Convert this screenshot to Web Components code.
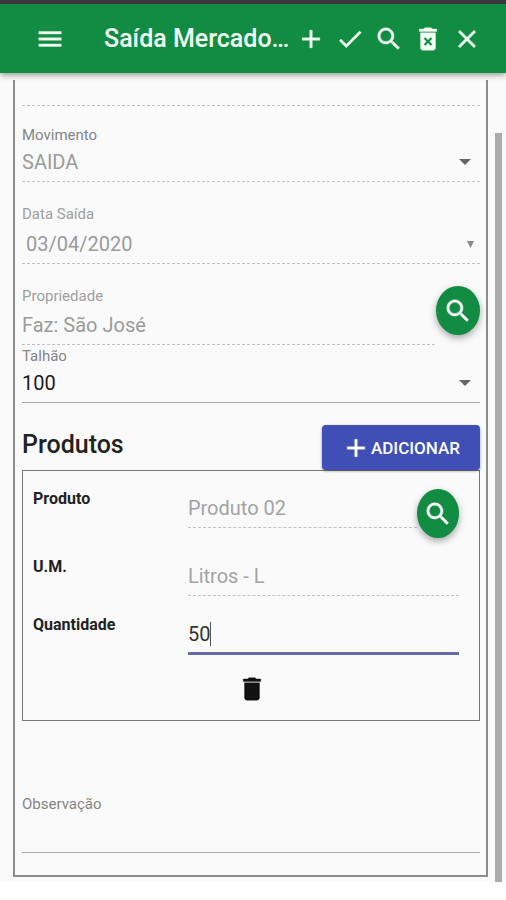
<!DOCTYPE html>
<html lang="pt-BR">
<head>
<meta charset="utf-8">
<meta name="viewport" content="width=device-width, initial-scale=1">
<title>Saída Mercadoria</title>
<style>
body { margin: 0; background: #fff; font-family: Roboto, "Liberation Sans", sans-serif; color: #212121; }
</style>
</head>
<body>
<saida-app></saida-app>
<script>
const ICONS = {
  menu: 'M3 18h18v-2H3v2zm0-5h18v-2H3v2zm0-7v2h18V6H3z',
  add: 'M19 13h-6v6h-2v-6H5v-2h6V5h2v6h6v2z',
  done: 'M9 16.2L4.8 12l-1.4 1.4L9 19 21 7l-1.4-1.4L9 16.2z',
  search: 'M15.5 14h-.79l-.28-.27C15.41 12.59 16 11.11 16 9.5 16 5.91 13.09 3 9.5 3S3 5.91 3 9.5 5.91 16 9.5 16c1.61 0 3.09-.59 4.23-1.57l.27.28v.79l5 4.99L20.49 19l-4.99-5zm-6 0C7.01 14 5 11.99 5 9.5S7.01 5 9.5 5 14 7.01 14 9.5 11.99 14 9.5 14z',
  discard: 'M6 19c0 1.1.9 2 2 2h8c1.1 0 2-.9 2-2V7H6v12zm2.46-7.12l1.41-1.41L12 12.59l2.12-2.12 1.41 1.41L13.41 14l2.12 2.12-1.41 1.41L12 15.41l-2.12 2.12-1.41-1.41L10.59 14l-2.13-2.12zM15.5 4l-1-1h-5l-1 1H5v2h14V4z',
  delete: 'M6 19c0 1.1.9 2 2 2h8c1.1 0 2-.9 2-2V7H6v12zM19 4h-3.5l-1-1h-5l-1 1H5v2h14V4z',
  close: 'M19 6.41L17.59 5 12 10.59 6.41 5 5 6.41 10.59 12 5 17.59 6.41 19 12 13.41 17.59 19 19 17.59 13.41 12z'
};

function define(name, render) {
  customElements.define(name, class extends HTMLElement {
    constructor() {
      super();
      this.attachShadow({ mode: 'open' });
    }
    connectedCallback() {
      this.shadowRoot.innerHTML = render(this);
    }
  });
}

define('m-icon', el => `
  <style>
    :host { display: block; width: 30px; height: 30px; flex: none; }
    svg { display: block; width: 100%; height: 100%; fill: currentColor; stroke: currentColor; stroke-width: .3; }
  </style>
  <svg viewBox="0 0 24 24" aria-hidden="true"><path d="${ICONS[el.getAttribute('name')]}"/></svg>`);

define('m-icon-button', el => `
  <style>
    :host { display: block; flex: none; }
    button { display: grid; place-items: center; width: 39px; height: 48px; padding: 0; border: 0; background: none; color: inherit; }
    :host([compact]) button { height: 30px; }
  </style>
  <button type="button" aria-label="${el.getAttribute('label')}"><m-icon name="${el.getAttribute('name')}"></m-icon></button>`);

define('m-fab', el => `
  <style>
    :host { display: block; flex: none; width: 44px; }
    button { display: grid; place-items: center; width: 100%; height: 49px; padding: 0; border: 0; border-radius: 50%;
      background: #128c43; color: #fff; box-shadow: 0 3px 7px rgba(0,0,0,.34); }
  </style>
  <button type="button" aria-label="${el.getAttribute('label')}"><m-icon name="search"></m-icon></button>`);

define('app-bar', el => `
  <style>
    :host { display: block; position: relative; border-top: 4px solid #39363e; background: #128c43; color: #f4fff4;
      box-shadow: 0 2px 6px rgba(0,0,0,.4); }
    header { display: flex; align-items: center; height: 69px; padding: 0 20px 0 30px; }
    h1 { flex: 1; min-width: 0; margin: 0 0 0 35px; font-size: 25px; line-height: 32px; font-weight: 500; white-space: nowrap; }
    nav { display: flex; }
  </style>
  <header>
    <m-icon-button name="menu" label="Menu"></m-icon-button>
    <h1><slot></slot></h1>
    <nav>
      <m-icon-button name="add" label="Novo"></m-icon-button>
      <m-icon-button name="done" label="Confirmar"></m-icon-button>
      <m-icon-button name="search" label="Pesquisar"></m-icon-button>
      <m-icon-button name="discard" label="Excluir"></m-icon-button>
      <m-icon-button name="close" label="Fechar"></m-icon-button>
    </nav>
  </header>`);

/* Stacked field: label above a select, text box or textarea, with an optional action at the end. */
define('m-field', el => {
  const kind = el.getAttribute('kind') || 'text';
  const value = el.getAttribute('value') || '';
  const off = el.hasAttribute('disabled') ? 'disabled' : '';
  const control = {
    select: `<select id="c" ${off}><option>${value}</option></select><svg class="arrow" width="12" height="6" viewBox="0 0 12 6" aria-hidden="true"><path d="M0 0h12L6 6z"/></svg>`,
    date: `<input id="c" value="${value}" ${off}><svg class="tick" width="7" height="7" viewBox="0 0 7 7" aria-hidden="true"><path d="M0 0h7L3.500 7z"/></svg>`,
    text: `<input id="c" value="${value}" ${off}>`,
    area: `<textarea id="c" rows="1"></textarea>`
  }[kind];
  return `
  <style>
    :host { display: flex; align-items: flex-start; gap: 1px; padding-top: 22px; }
    :host([tight]) { padding-top: 1px; }
    .field { flex: 1; min-width: 0; display: flex; flex-direction: column; gap: 5px; padding-bottom: 5px; border-bottom: 1px solid #a8a8a8; }
    .field.select { gap: 3px; }
    .field.date { gap: 6px; }
    .field.disabled { border-bottom: 1px dashed #c2c2c2; }
    label { font-size: 15px; line-height: 20px; color: #858585; }
    .disabled:not(.select) label { color: #a0a0a0; }
    .value { display: flex; align-items: center; height: 28px; }
    input, select, textarea { flex: 1; min-width: 0; width: 100%; height: 28px; margin: 0; padding: 0; border: 0; outline: 0; resize: none;
      background: none; appearance: none; border-radius: 0; font: 20px/28px Roboto, "Liberation Sans", sans-serif; color: #1c1c1c; opacity: 1; overflow: hidden; }
    :disabled { color: #9b9b9b; }
    .date input { padding-left: 4px; }
    .arrow { margin-right: 9px; fill: #666; }
    .tick { margin-right: 6px; fill: #888; }
  </style>
  <div class="field ${kind} ${off}">
    <label for="c">${el.getAttribute('label')}</label>
    <div class="value">${control}</div>
  </div>
  <slot name="action"></slot>`;
});

/* Product line: bold label on the left, value on the right. */
define('product-row', el => `
  <style>
    :host { display: grid; grid-template-columns: 4fr 7fr; align-items: start; }
    label { font-size: 16px; line-height: 20px; font-weight: 700; color: #222; }
    .side { display: flex; align-items: flex-start; }
    .value { flex: 1; min-width: 0; display: flex; align-items: center; padding: 5px 0; border-bottom: 1px dashed #c2c2c2; }
    input { flex: 1; min-width: 0; width: 100%; height: 28px; padding: 0; border: 0; outline: 0; background: none;
      font: 20px/28px Roboto, "Liberation Sans", sans-serif; color: #333; }
    :disabled { color: #a3a3a3; }
    :host([active]) .value { padding-bottom: 4px; border-bottom: 3px solid #666ba8; }
    :host([active]) input { flex: none; width: auto; min-width: 2ch; field-sizing: content; }
    .caret { width: 1px; height: 24px; background: #555; }
    ::slotted(m-fab) { width: 42px; }
  </style>
  <label for="c">${el.getAttribute('label')}</label>
  <div class="side">
    <div class="value"><input id="c" value="${el.getAttribute('value')}" ${el.hasAttribute('active') ? '' : 'disabled'}>${el.hasAttribute('active') ? '<span class="caret"></span>' : ''}</div>
    <slot name="action"></slot>
  </div>`);

define('product-list', el => `
  <style>
    :host { display: block; padding-top: 22px; }
    .head { display: flex; align-items: center; justify-content: space-between; }
    h2 { margin: 0; font-size: 25px; line-height: 32px; font-weight: 500; color: #222; padding-bottom: 6px; }
    .add { display: flex; align-items: center; height: 45px; padding: 0 20px 0 19px; border: 0; border-radius: 4px; background: #3f4fb5; color: #fff;
      font: 500 17px/24px Roboto, "Liberation Sans", sans-serif; box-shadow: 0 1px 3px rgba(0,0,0,.4); }
    .box { display: flex; flex-direction: column; gap: 19px; padding: 18px 20px 16px 10px; border: 1px solid #777; }
    .foot { display: flex; justify-content: center; color: #111; padding-left: 11px; }
  </style>
  <div class="head">
    <h2>Produtos</h2>
    <button class="add" type="button"><m-icon name="add"></m-icon>ADICIONAR</button>
  </div>
  <div class="box">
    <slot></slot>
    <div class="foot"><m-icon-button compact name="delete" label="Remover produto"></m-icon-button></div>
  </div>`);

define('saida-app', el => `
  <style>
    :host { display: block; }
    main { display: flex; background: #fafafa; padding: 7px 4px 0 13px; }
    form { flex: 1; min-width: 0; margin-bottom: 5px; padding: 0 6px 22px 7px; border: 2px solid #8c8c8c; border-top: 0; }
    .previous { height: 25px; border-bottom: 1px dashed #c2c2c2; }
    .notes { margin-top: 72px; }
    .thumb { flex: none; width: 7px; margin: 53px 0 0 7px; background: #adadad; }
  </style>
  <app-bar>Saída Mercado…</app-bar>
  <main>
    <form>
      <div class="previous"></div>
      <m-field kind="select" label="Movimento" value="SAIDA" disabled style="padding-top:19px"></m-field>
      <m-field kind="date" label="Data Saída" value="03/04/2020" disabled></m-field>
      <m-field label="Propriedade" value="Faz: São José" disabled><m-fab slot="action" label="Pesquisar propriedade"></m-fab></m-field>
      <m-field kind="select" label="Talhão" value="100" tight></m-field>
      <product-list>
        <product-row label="Produto" value="Produto 02"><m-fab slot="action" label="Pesquisar produto"></m-fab></product-row>
        <product-row label="U.M." value="Litros - L"></product-row>
        <product-row label="Quantidade" value="50" active></product-row>
      </product-list>
      <m-field class="notes" kind="area" label="Observação" tight></m-field>
    </form>
    <div class="thumb"></div>
  </main>`);
</script>
</body>
</html>
